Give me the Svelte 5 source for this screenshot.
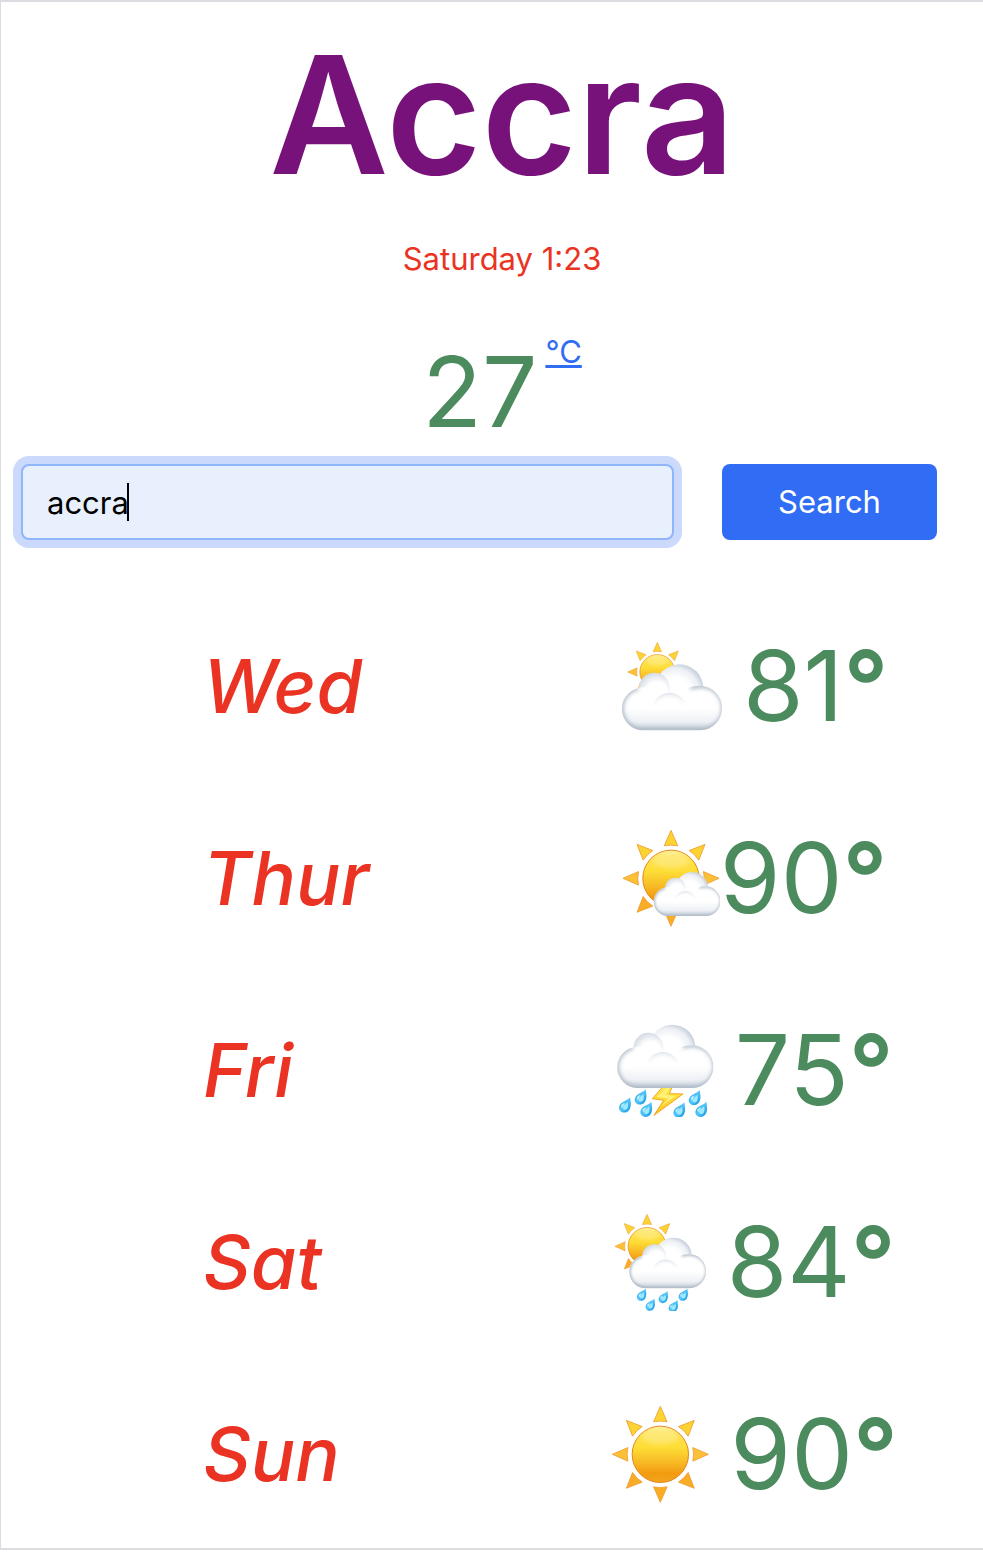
<script>
  let query = $state('accra');

  const forecast = [
    { day: 'Wed', icon: 'cloudy', temp: 81 },
    { day: 'Thur', icon: 'fair', temp: 90, tight: true },
    { day: 'Fri', icon: 'storm', temp: 75 },
    { day: 'Sat', icon: 'showers', temp: 84 },
    { day: 'Sun', icon: 'sunny', temp: 90 }
  ];

  const icons = {
    cloudy: { w: 100, h: 89, box: '66 31 300 267', label: 'Mostly cloudy', sun: [172, 121, 1.86], cloud: [67, 98, 3] },
    fair: { w: 97, h: 97, box: '72 27 291 291', label: 'Mostly sunny', sun: [216, 172, 3], cloud: [165, 153, 2] },
    storm: {
      w: 97, h: 93, box: '54 40 291 279', label: 'Thunderstorm', cloud: [56, 42, 2.88], bolt: true,
      drops: [[78, 284], [125, 260], [142, 297], [241, 299], [287, 262], [307, 297]], dropScale: 1
    },
    showers: {
      w: 91, h: 97, box: '51 33 273 291', label: 'Sun and showers', sun: [147, 130, 2.01], cloud: [95, 104, 2.3],
      drops: [[131, 276], [157, 306], [196, 283], [226, 310], [256, 276]], dropScale: 0.8
    },
    sunny: { w: 97, h: 97, box: '38 30 291 291', label: 'Sunny', sun: [183, 175, 3] }
  };
  const angles = [0, 45, 90, 135, 180, 225, 270, 315];
</script>

{#snippet weather(icon)}
  <svg width={icon.w} height={icon.h} viewBox={icon.box} role="img" aria-label={icon.label}>
    {#if icon.sun}
      <g transform="translate({icon.sun[0]} {icon.sun[1]}) scale({icon.sun[2]})"><use href="#sun" /></g>
    {/if}
    {#if icon.bolt}
      <path d="M197 222L160 264L194 269L165 314L252 250L211 249L222 222Z" fill="url(#boltFill)" stroke="#f5a623" stroke-width="3" stroke-linejoin="round" />
      <path d="M205 230L174 258L208 264L184 289L229 256L199 252L214 230Z" fill="#fff17a" />
    {/if}
    {#if icon.cloud}
      <g transform="translate({icon.cloud[0]} {icon.cloud[1]}) scale({icon.cloud[2]})"><use href="#cloud" /></g>
    {/if}
    {#each icon.drops ?? [] as [x, y]}
      <g transform="translate({x} {y}) scale({icon.dropScale})"><use href="#drop" /></g>
    {/each}
  </svg>
{/snippet}

<svg class="defs" width="0" height="0" aria-hidden="true">
  <defs>
    <linearGradient id="sunFill" x1="0" y1="0" x2="0" y2="1">
      <stop offset="0" stop-color="#fff09a" />
      <stop offset=".12" stop-color="#fde253" />
      <stop offset=".38" stop-color="#fedd36" />
      <stop offset=".62" stop-color="#f8bd27" />
      <stop offset=".84" stop-color="#f29b10" />
      <stop offset="1" stop-color="#f2a51e" />
    </linearGradient>
    <linearGradient id="frontFill" x1="0" y1="0" x2="0" y2="1">
      <stop offset=".5" stop-color="#fff" />
      <stop offset=".8" stop-color="#eef1f5" />
      <stop offset="1" stop-color="#c6d0da" />
    </linearGradient>
    <linearGradient id="boltFill" x1="0" y1="0" x2="0" y2="1">
      <stop offset="0" stop-color="#fff04d" />
      <stop offset="1" stop-color="#fdc21c" />
    </linearGradient>
    <linearGradient id="dropFill" x1="0" y1="0" x2="1" y2="1">
      <stop offset="0" stop-color="#149de8" />
      <stop offset=".5" stop-color="#55c5f8" />
      <stop offset="1" stop-color="#078bdd" />
    </linearGradient>
    <radialGradient id="bumpFill" cx=".4" cy=".6" r=".65">
      <stop offset=".5" stop-color="#fff" />
      <stop offset=".8" stop-color="#eceff4" />
      <stop offset="1" stop-color="#c0cad6" />
    </radialGradient>
    <radialGradient id="smallFill" cx=".58" cy=".62" r=".65">
      <stop offset=".5" stop-color="#fff" />
      <stop offset="1" stop-color="#d2d9e2" />
    </radialGradient>
    <radialGradient id="innerFill" cx=".5" cy=".5" r=".5">
      <stop offset=".65" stop-color="#fff" />
      <stop offset="1" stop-color="#d9dfe8" />
    </radialGradient>
    <linearGradient id="fadeDown" x1="0" y1="0" x2="0" y2="1">
      <stop offset="0" stop-color="#fff" />
      <stop offset=".5" stop-color="#000" />
    </linearGradient>
    <mask id="topOnly"><rect x="26" y="26" width="44" height="30" fill="url(#fadeDown)" /></mask>
    <filter id="soft" x="-20%" y="-20%" width="140%" height="140%"><feGaussianBlur stdDeviation="2.2" /></filter>
    <path id="bodyShape" d="M21 66A21.500 21.500 0 0 1 21 23C27 23 32 25 36 31C42 27 50 27 56 31C61 25 68 21.500 77 21.500A22.200 22.200 0 0 1 78 66Z" />
    <clipPath id="bodyClip"><use href="#bodyShape" /></clipPath>

    <g id="sun">
      {#each angles as angle}
        <path
          d="M0 -48L6.800 -32.500Q0 -34 -6.800 -32.500Z"
          transform="rotate({angle})"
          fill={angle > 90 && angle < 270 ? '#f9ad27' : angle === 90 || angle === 270 ? '#fbc037' : '#fbd332'}
          stroke="#ef9b2c"
          stroke-width=".8"
          stroke-linejoin="round"
        />
      {/each}
      <circle r="28.200" fill="url(#sunFill)" stroke="#e5851d" stroke-width="1" />
      <ellipse cy="-18" rx="18" ry="8" fill="#fff6bd" opacity=".35" filter="url(#soft)" />
    </g>

    <g id="cloud">
      <circle cx="57" cy="24" r="24" fill="url(#bumpFill)" />
      <circle cx="32" cy="24" r="15.500" fill="url(#smallFill)" />
      <use href="#bodyShape" fill="url(#frontFill)" />
      <g clip-path="url(#bodyClip)">
        <path
          d="M16 23.500A21.500 21.500 0 0 0 21 66H78A22.200 22.200 0 0 0 80 21.500C76 21 71 22 68 23"
          fill="none"
          stroke="#a4b1c0"
          stroke-width="4"
          filter="url(#soft)"
        />
      </g>
      <g mask="url(#topOnly)">
        <circle cx="47" cy="46" r="17.500" fill="url(#innerFill)" />
      </g>
    </g>

    <g id="drop">
      <path d="M15 -24C17 -10 20 2 13 13C7 23 -8 25 -15 16C-22 6 -15 -5 -6 -10C3 -15 10 -17 15 -24Z" fill="url(#dropFill)" />
      <path d="M8 -10C11 1 10 9 3 13C-3 15 -8 11 -7 5C-5 -2 4 -4 8 -10Z" fill="#9ce8ff" />
      <path d="M-11 -2Q-5 -6 0 -8L-9 8Q-14 4 -11 -2Z" fill="#d5f7ff" opacity=".8" />
    </g>
  </defs>
</svg>

<main>
  <header>
    <h1>Accra</h1>
    <p class="date">Saturday 1:23</p>
    <div class="current">
      <span class="degrees">27</span>
      <a href="#units">°C</a>
    </div>
  </header>

  <form onsubmit={(event) => event.preventDefault()}>
    <div class="field">
      <input type="text" aria-label="City" autocomplete="off" bind:value={query} />
      <span class="caret"></span>
    </div>
    <button type="submit">Search</button>
  </form>

  <ul>
    {#each forecast as item}
      <li>
        <em>{item.day}</em>
        <div class="reading" class:tight={item.tight}>
          {@render weather(icons[item.icon])}
          <span>{item.temp}<b>°</b></span>
        </div>
      </li>
    {/each}
  </ul>
</main>

<style>
  :global(body) {
    margin: 0;
    background: #fff;
  }

  .defs {
    position: absolute;
  }

  main {
    box-sizing: border-box;
    padding: 18px 0 18px 20px;
    border: solid #dcdce1;
    border-width: 2px 0 2px 1px;
    font: 31px/48px Inter, sans-serif;
  }

  header {
    text-align: center;
  }

  h1 {
    margin: 0;
    color: #78127b;
    font-size: 164px;
    line-height: 190px;
    font-weight: 600;
  }

  .date {
    margin: 25px 0 45px;
    color: #ea3323;
  }

  .current {
    display: flex;
    justify-content: center;
    align-items: flex-start;
    gap: 8px;
  }

  .degrees,
  .reading {
    color: #4c8b5e;
    font-size: 98px;
    line-height: 128px;
  }

  b {
    font-weight: 600;
  }

  a {
    color: #316cf4;
    text-decoration-thickness: 3px;
  }

  form {
    display: flex;
    gap: 48px;
    margin-top: 8px;
    padding-right: 46px;
  }

  .field {
    position: relative;
    flex: 1;
  }

  input {
    box-sizing: border-box;
    width: 100%;
    height: 76px;
    padding: 0 24px;
    border: 2px solid #8fb5fa;
    border-radius: 8px;
    outline: 0;
    background: #e8f0fe;
    box-shadow: 0 0 0 8px #cbd9fc;
    color: #000;
    font: inherit;
  }

  .caret {
    position: absolute;
    top: 19px;
    left: 106px;
    width: 2px;
    height: 38px;
    background: #000;
  }

  button {
    width: 215px;
    height: 76px;
    padding: 0;
    border: 0;
    border-radius: 8px;
    background: #316cf4;
    color: #fff;
    font: inherit;
  }

  ul {
    display: grid;
    gap: 40px;
    margin: 70px 0 0;
    padding: 0;
    list-style: none;
  }

  li {
    display: grid;
    grid-template-columns: 13fr 12fr;
    align-items: center;
    height: 152px;
  }

  em {
    padding-left: 182px;
    color: #ea3323;
    font-size: 74px;
    line-height: 96px;
    font-weight: 500;
  }

  .reading {
    display: flex;
    justify-content: center;
    align-items: center;
    gap: 21px;
    padding-left: 6px;
  }

  .tight {
    gap: 0;
  }

  .reading svg {
    flex: none;
  }
</style>
